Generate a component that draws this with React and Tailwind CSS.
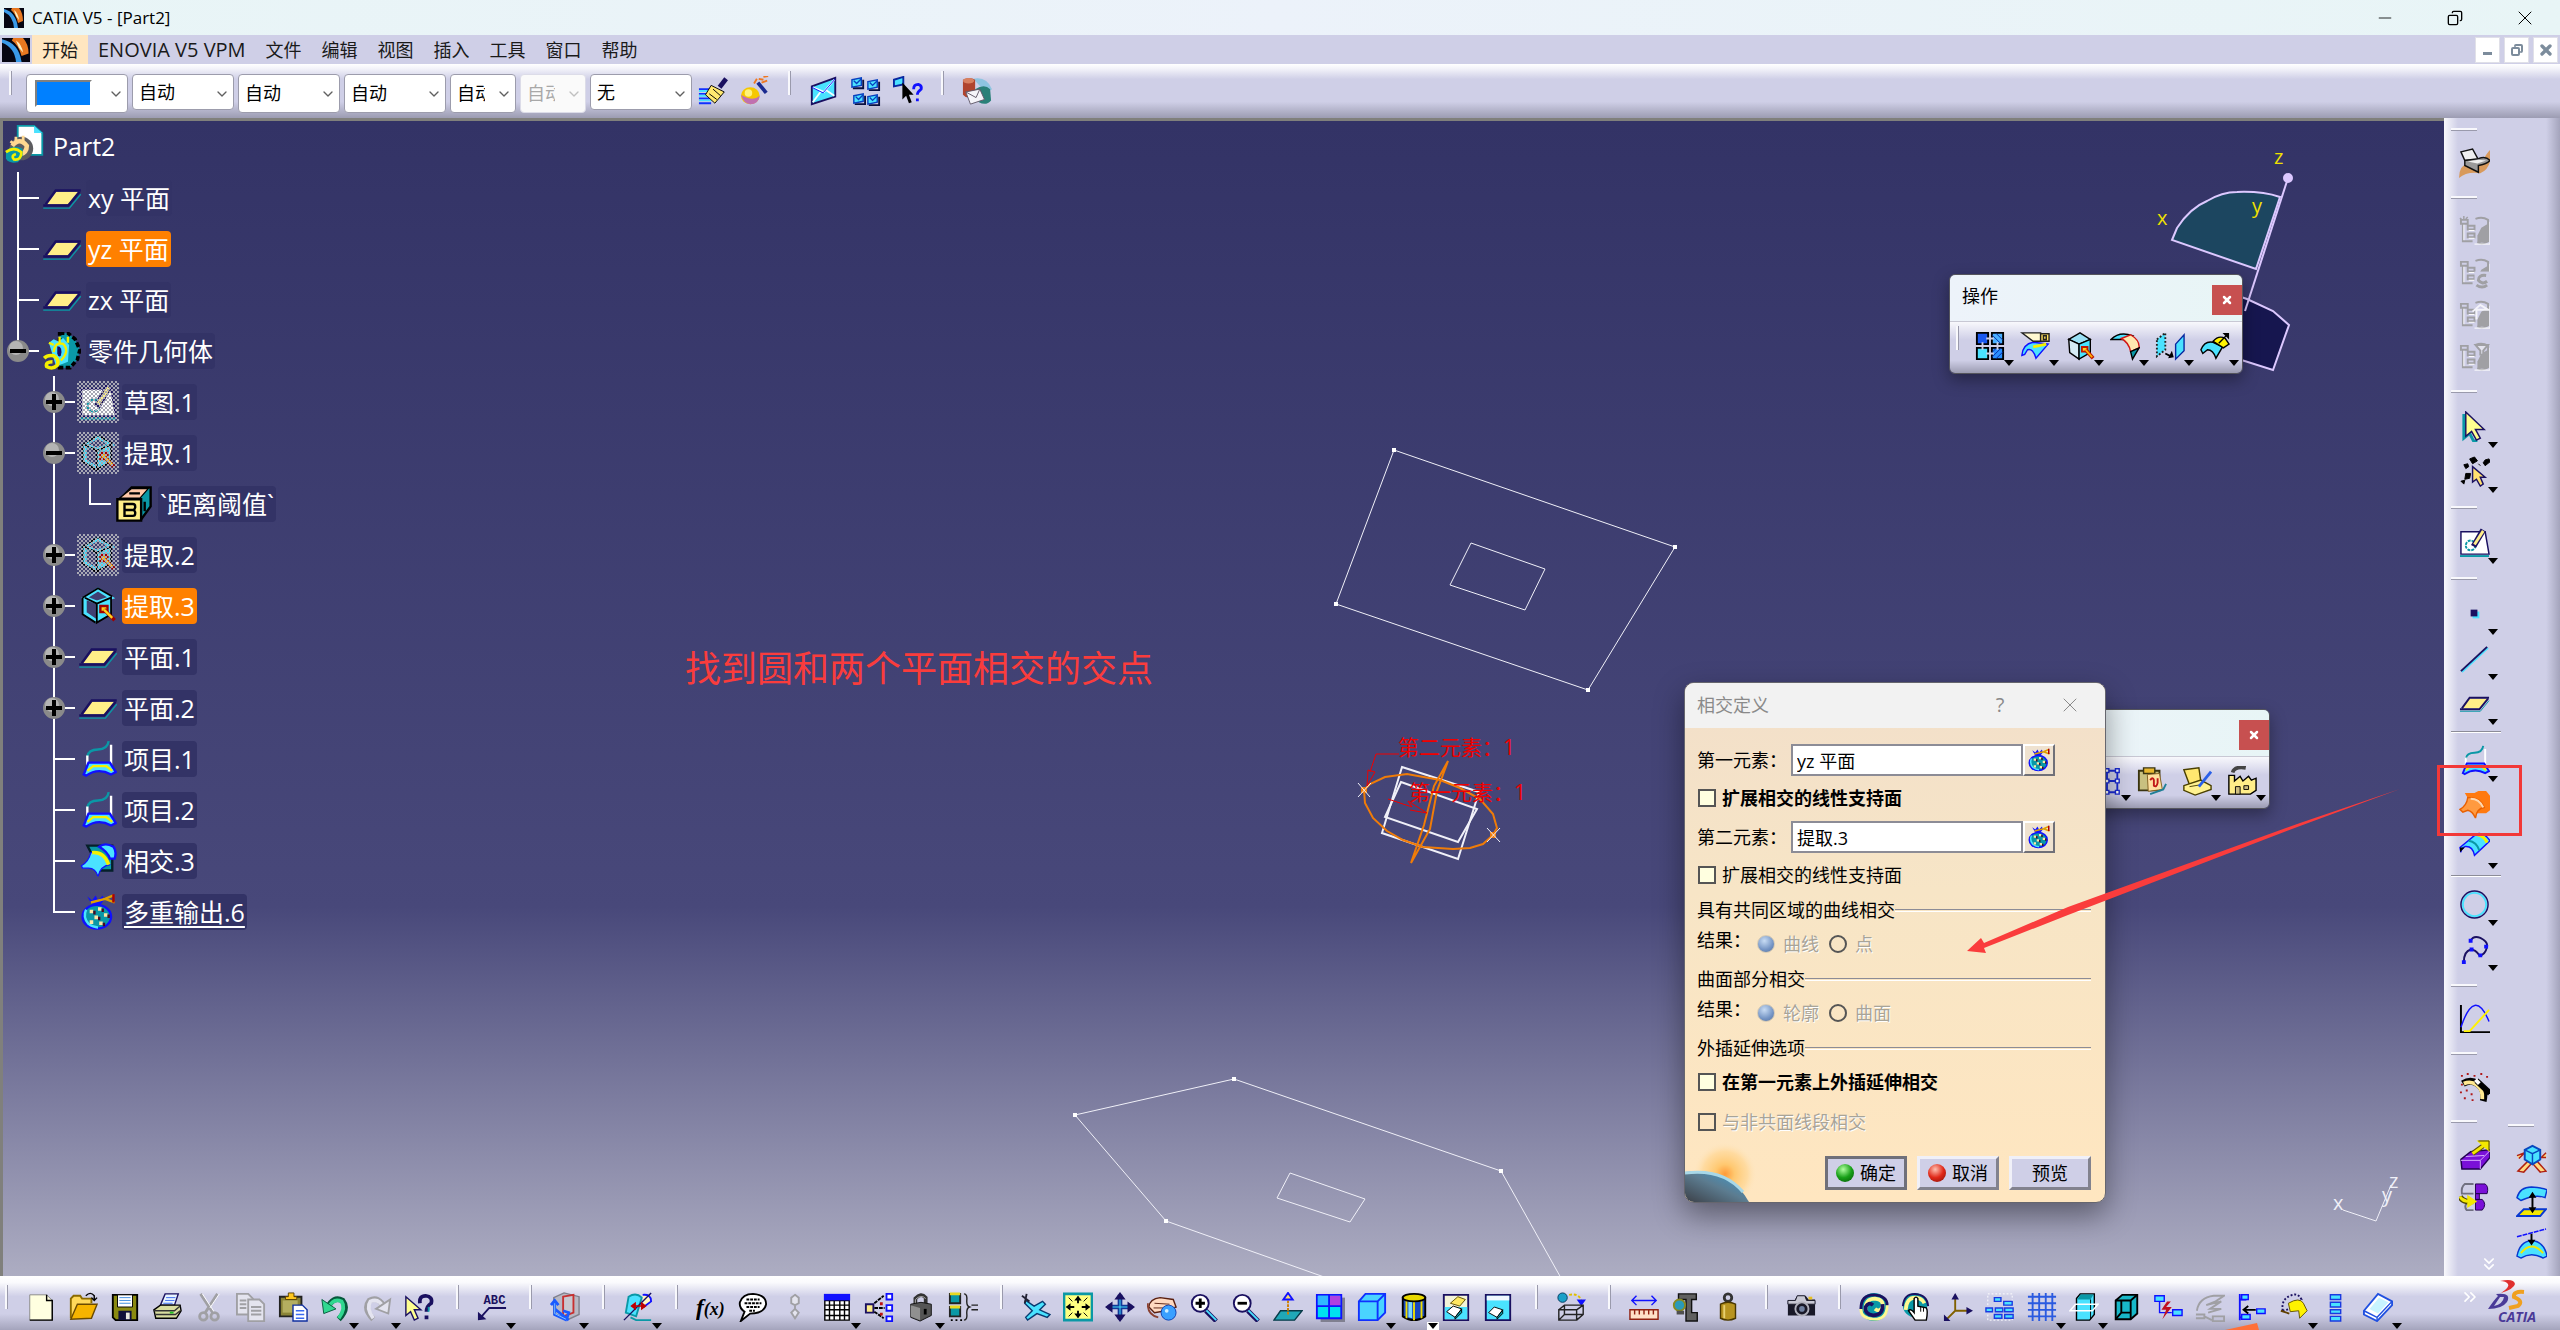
import React from 'react';
import { ChevronDown, ChevronsRight, ChevronsDown, Minus, Copy, X } from 'lucide-react';

const FONT = "font-['Open_Sans','Noto_Sans_CJK_SC',sans-serif]";

const NAVY = '#1a1060';
const CYAN = '#4ae2ff';
const TEAL = '#0a98a6';
const BLUE = '#1010ff';
const PALE = '#ffee88';
const GREY = '#a0a0a4';

const planeIcon = (
  <>
    <path d="M10 11 L30 11 L21 21 L3 21 Z" fill={PALE} />
    <path d="M3 21 L11 10 H31" fill="none" stroke={NAVY} strokeWidth="2" />
    <path d="M1 22 H21 L30 11" fill="none" stroke={NAVY} strokeWidth="2" />
    <path d="M1 24 H22 L31 13" fill="none" stroke={TEAL} strokeWidth="1" />
  </>
);

const cubeExtract = (
  <>
    <path d="M4 9 L16 2 L27 9 L15 14 Z" fill="#9ae0f4" stroke="#000" strokeWidth="1.5" />
    <path d="M4 9 L15 14 V30 L5 23 Z" fill="#d6ecf5" stroke="#000" strokeWidth="1.5" />
    <path d="M15 14 L27 9 V23 L15 30 Z" fill={CYAN} stroke="#000" strokeWidth="1.5" />
    <path d="M18 17 h6 v5 h-6 z" fill="#ffd21c" stroke="#c01800" strokeWidth="2" />
    <path d="M22 20 L30 29" stroke="#c01800" strokeWidth="4" />
    <path d="M22 20 L29 28" stroke="#ffb400" strokeWidth="2" />
  </>
);

// same cube seen through: only the right face is filled
const cubeExtractOpen = (
  <>
    <path d="M5 9 L16 2 L27 9 L15 13 Z M5 9 V22 L15 29" fill="none" stroke={CYAN} strokeWidth="3" />
    <path d="M3 9 L16 1 L28 8 M3 9 V23 L14 30 M5 9 L15 14" fill="none" stroke="#000" strokeWidth="1.5" />
    <path d="M15 14 L27 9 V23 L15 30 Z" fill={CYAN} stroke="#000" strokeWidth="1.5" />
    <path d="M18 16 h6 v5 h-6 z" fill="#ffd21c" stroke="#a00000" strokeWidth="2" />
    <path d="M21 19 L30 28" stroke="#a00000" strokeWidth="3" />
    <path d="M21 19 L28 26" stroke="#ffd21c" strokeWidth="2" />
  </>
);

const bagIcon = (
  <>
    <path d="M7 3 l4 3 l3 -4 l2 4 l4 -4 l1 4 l-3 4 h-7 z" fill={BLUE} />
    <path d="M10 8 L22 5 L29 2 M22 5 L30 8" stroke="#e0a000" strokeWidth="2" fill="none" />
    <path d="M29 1 V8" stroke="#b00000" strokeWidth="2" />
    <ellipse cx="15" cy="20" rx="12" ry="10" fill={TEAL} stroke={BLUE} strokeWidth="2" />
    <path d="M6 14 Q3 20 8 26 Q12 29 16 29" stroke={CYAN} strokeWidth="2" fill="none" />
    <path d="M9 14h3v3h-3z M16 12h3v3h-3z M21 17h3v3h-3z M13 19h3v3h-3z M9 23h3v3h-3z M17 24h3v3h-3z" fill="#ffe7a8" />
    <path d="M12 15h2v3h-2z M19 13h2v3h-2z M24 18h2v3h-2z M16 20h2v3h-2z M20 25h2v3h-2z" fill="#4a0a20" />
  </>
);

const itemIcon = (
  <>
    <path d="M7 14 Q8 8 16 8 Q24 8 25 1" fill="none" stroke={TEAL} strokeWidth="2" />
    <path d="M7 13 V26 M27 4 V22" stroke="#fff" strokeWidth="2" />
    <path d="M4 29 L8 19 H26 L31 27 L27 29 Q16 23 6 30 Z" fill={CYAN} stroke={BLUE} strokeWidth="2" />
    <path d="M7 26 L12 22 H23 L28 26" fill="none" stroke="#f4f000" strokeWidth="2" />
  </>
);

const intersectIcon = (
  <>
    <path d="M7 3 H28 V24 H18 Z" fill={TEAL} stroke="#06202a" strokeWidth="2" />
    <path d="M17 4 Q22 0 29 4 Q32 8 30 14 L26 14 Q24 8 17 4 Z" fill={CYAN} stroke={BLUE} strokeWidth="2" />
    <path d="M2 20 Q8 17 10 9 Q22 8 26 19 Q18 20 16 29 Q14 22 8 22 L3 22 Z" fill={CYAN} stroke={BLUE} strokeWidth="1" />
    <path d="M11 9 Q21 8 25 19" fill="none" stroke="#f4f000" strokeWidth="3" />
  </>
);

// greyed database buttons share the little tree on the left
const disabledTree = (
  <>
    <path d="M2 4 h7 v4 h-7 z M9 10 h7 v4 h-7 z M9 18 h7 v4 h-7 z M4 8 V26 H14" fill="none" stroke={GREY} strokeWidth="2" />
    <path d="M17 3 Q24 0 30 4 V26 Q24 30 19 27" fill="none" stroke={GREY} strokeWidth="2" />
    <path d="M23 12 L30 8 V27 H19 V20 Z" fill={GREY} />
    <path d="M32 6 V29 H16 M5 9 V25 M10 15 H16 M10 23 H16" stroke="#fff" strokeWidth="1" fill="none" />
  </>
);

const ICONS = {
  plane: planeIcon,
  extract: cubeExtract,
  extractOpen: cubeExtractOpen,
  bag: bagIcon,
  item: itemIcon,
  intersect: intersectIcon,
  body: (
    <>
      <path d="M14 1 h7 l6 5 l4 9 l-2 8 l-6 7 h-9 z" fill={TEAL} stroke="#000" strokeWidth="3" strokeDasharray="4 2" />
      <path d="M5 9 l4 -3 l4 2 l4 -3 l5 6 l-1 14 l-10 4 z" fill={CYAN} />
      <path d="M14 4 v5 M21 4 v5 M5 9 l4 2 M9 17 Q10 8 17 10 Q23 16 15 24" fill="none" stroke="#f4f000" strokeWidth="2" />
      <path d="M12 12 Q17 12 15 20 Q13 22 12 18 Z" fill={NAVY} />
      <path d="M1 22 Q4 19 9 20 Q14 23 12 28 Q8 32 3 29 Q2 25 8 25" fill="none" stroke="#f4f000" strokeWidth="3" />
    </>
  ),
  sketch: (
    <>
      <path d="M2 5 H27 L31 28 H2 Z" fill="#fff" stroke={NAVY} strokeWidth="1.5" />
      <circle cx="12" cy="19" r="5" fill="none" stroke={TEAL} strokeWidth="2" strokeDasharray="3 1" />
      <path d="M15 20 L25 3" stroke={NAVY} strokeWidth="6" />
      <path d="M16 18 L25 4" stroke={PALE} strokeWidth="3" />
      <path d="M1 30 H31" stroke={TEAL} strokeWidth="2" />
    </>
  ),
  param: (
    <>
      <path d="M4 12 L14 2 H30 V18 L22 29 Z" fill={TEAL} stroke="#000" strokeWidth="2" />
      <path d="M4 11 L14 3 H28 L21 11 Z" fill="#ffc8a8" stroke="#000" strokeWidth="1" />
      <path d="M12 7 h9 M25 14 v8" stroke="#000" strokeWidth="2" />
      <path d="M2 12 h20 v18 h-20 z" fill={PALE} stroke="#000" strokeWidth="2" />
      <path d="M8 16 h7 q2 0 2 2 v1 l-1 2 l1 2 v1 q0 2 -2 2 h-7 z M8 21 h8" fill="none" stroke="#000" strokeWidth="2" />
    </>
  ),
  brush: (
    <>
      <path d="M1 14 H14 M1 19 H16 M1 24 H18 M1 29 H14" stroke="#1030ff" strokeWidth="2" />
      <path d="M1 16 H14 M1 21 H14 M1 26 H14" stroke={CYAN} strokeWidth="2" />
      <path d="M14 10 L28 17 L18 29 L8 20 Z" fill="#ffe870" stroke="#000" strokeWidth="1" />
      <path d="M12 19 L20 25 M16 14 L24 21" stroke="#000" strokeWidth="1" />
      <path d="M23 12 L30 3" stroke={NAVY} strokeWidth="5" />
    </>
  ),
  magic: (
    <>
      <ellipse cx="11" cy="21" rx="10" ry="9" fill="#f5c800" />
      <path d="M1 20 Q4 30 11 30 Q20 30 21 21 Q14 28 1 20 Z" fill="#c070b0" />
      <ellipse cx="9" cy="18" rx="4" ry="4" fill="#fff27a" />
      <path d="M19 7 L28 18" stroke="#1a2a90" strokeWidth="4" />
      <path d="M15 8 l3 -5 M20 3 l5 1 M25 1 l5 -1 M23 7 l6 -2" stroke="#f07820" strokeWidth="2" />
    </>
  ),
  envelope: (
    <>
      <path d="M3 11 L28 2 V22 L3 30 Z" fill={CYAN} stroke={NAVY} strokeWidth="2" />
      <path d="M4 12 L16 17 L27 4 M4 28 L13 16 M27 21 L18 15" fill="none" stroke="#f4ffff" strokeWidth="2" />
      <path d="M28 3 L15 18 L3 12" fill="none" stroke={BLUE} strokeWidth="1" />
    </>
  ),
  envelopes: (
    <>
      {[[1, 2], [18, 4], [3, 19], [18, 20]].map(([x, y]) => (
        <g key={`${x}-${y}`}>
          <path d={`M${x + 1} ${y + 11} h11 v-9`} fill="none" stroke="#0a1040" strokeWidth="2" />
          <path d={`M${x} ${y + 2} L${x + 10} ${y} V${y + 8} L${x} ${y + 10} Z`} fill={CYAN} stroke="#0840c0" strokeWidth="1.5" />
          <path d={`M${x + 2} ${y + 3} l3 3 l5 -5`} fill="none" stroke="#0840c0" strokeWidth="1.5" />
        </g>
      ))}
    </>
  ),
  whatsThisMail: (
    <>
      <path d="M1 4 L11 1 V9 L1 11 Z" fill={CYAN} stroke="#0828a0" strokeWidth="2" />
      <path d="M10 7 V25 L14 21 L17 29 L20 28 L17 20 H22 Z" fill="#000" />
      <path d="M22 14 Q22 9 27 9 Q31 10 30 14 Q26 17 26 20 M26 24 V27" fill="none" stroke={BLUE} strokeWidth="3" />
    </>
  ),
  catalog: (
    <>
      <path d="M12 3 Q26 0 32 14 L26 18 Z" fill="#8ec4e0" />
      <path d="M1 4 Q8 1 14 4 V20 Q6 26 1 20 Z" fill="#b0442e" />
      <ellipse cx="7" cy="5" rx="6" ry="3" fill="#d88060" />
      <path d="M14 14 Q24 8 30 14 L31 26 Q26 32 18 28 Z" fill="#2a8078" />
      <path d="M4 17 L19 14 L24 25 L9 30 Z" fill="#f5f5fa" stroke="#605868" strokeWidth="1" />
      <path d="M4 17 L15 23 L19 14" fill="none" stroke="#605868" strokeWidth="1" />
    </>
  ),
  newFile: (
    <>
      <path d="M4 3 H22 L28 9 V30 H4 Z" fill="#ffffe0" stroke="#888" strokeWidth="1" />
      <path d="M22 3 V9 H28 V30 H4" fill="none" stroke="#000" strokeWidth="1.5" />
    </>
  ),
  open: (
    <>
      <path d="M3 28 V7 L6 4 H13 L15 7 H25 V12" fill="#ffd95a" stroke="#8a6a00" strokeWidth="2" />
      <path d="M3 29 L10 13 H31 L25 28 Z" fill="#f6b400" stroke="#6a4a00" strokeWidth="1.5" />
      <path d="M19 4 Q24 -1 28 4 V8 M25 6 L28 9 L31 6" fill="none" stroke="#000" strokeWidth="1.5" />
    </>
  ),
  save: (
    <>
      <path d="M3 3 H29 V30 H6 L3 27 Z" fill="#8a8a10" stroke="#000" strokeWidth="2" />
      <path d="M8 3 H24 V16 H8 Z" fill="#fff" stroke="#000" strokeWidth="1" />
      <path d="M10 6 H22 M10 9 H22 M10 12 H22" stroke="#3a8ae0" strokeWidth="1" />
      <path d="M9 20 H23 V30 H9 Z" fill="#10103a" />
      <path d="M17 22 h4 v7 h-4 z" fill="#e8e8e0" />
    </>
  ),
  print: (
    <>
      <path d="M9 14 L14 2 H28 L24 14 Z" fill="#e8f4ff" stroke={NAVY} strokeWidth="1.5" />
      <path d="M15 6 H25 M14 9 H24 M12 12 H22" stroke="#3a6af0" strokeWidth="1" />
      <path d="M2 19 L9 14 H30 L31 20 L26 28 H4 Z" fill="#d8dca0" stroke="#000" strokeWidth="1.5" />
      <path d="M2 20 H24 L30 15 M4 24 H25 L30 20" fill="none" stroke="#333" strokeWidth="1.5" />
      <path d="M19 21 h4 v2 h-4z" fill="#20c020" />
    </>
  ),
  cut: (
    <>
      <path d="M7 2 L20 22 M25 2 L12 22" stroke={GREY} strokeWidth="3" />
      <path d="M9 2 L22 22 M27 2 L17 17" stroke="#fff" strokeWidth="1" />
      <circle cx="10" cy="26" r="4" fill="none" stroke={GREY} strokeWidth="3" />
      <circle cx="22" cy="26" r="4" fill="none" stroke={GREY} strokeWidth="3" />
    </>
  ),
  copy: (
    <>
      <path d="M1 2 H13 L18 7 V24 H1 Z" fill="#e4e4ee" stroke={GREY} strokeWidth="2" />
      <path d="M13 8 H25 L30 13 V31 H13 Z" fill="#e4e4ee" stroke={GREY} strokeWidth="2" />
      <path d="M4 9 H11 M4 13 H11 M4 17 H11 M16 16 H27 M16 20 H27 M16 24 H27" stroke={GREY} strokeWidth="2" />
    </>
  ),
  paste: (
    <>
      <path d="M2 5 H25 V26 H2 Z" fill="#8a8438" stroke="#222" strokeWidth="2" />
      <path d="M5 9 H21 V22 H5 Z" fill="#b4ae60" />
      <path d="M8 8 V5 H11 V1 H17 V5 H20 V8 Z" fill="#ffc820" stroke="#5a4000" strokeWidth="1" />
      <path d="M16 14 H26 L31 19 V31 H16 Z" fill="#fff" stroke="#1030a0" strokeWidth="1.5" />
      <path d="M19 20 H28 M19 24 H28 M19 28 H28" stroke="#3a6af0" strokeWidth="1.5" />
    </>
  ),
  undo: (
    <>
      <path d="M8 17 Q14 4 24 9 Q31 18 20 29" fill="none" stroke="#065a3c" strokeWidth="6" />
      <path d="M9 17 Q14 6 23 10 Q28 17 20 28" fill="none" stroke="#30d890" strokeWidth="4" />
      <path d="M2 8 L4 23 L17 18 Z" fill="#30d890" stroke="#065a3c" strokeWidth="1" />
    </>
  ),
  redo: (
    <>
      <path d="M24 17 Q18 4 8 9 Q1 18 12 29" fill="none" stroke={GREY} strokeWidth="6" />
      <path d="M23 17 Q18 6 9 10 Q4 17 12 28" fill="none" stroke="#e4e4f0" strokeWidth="4" />
      <path d="M30 8 L28 23 L15 18 Z" fill="#e4e4f0" stroke={GREY} strokeWidth="2" />
    </>
  ),
  help: (
    <>
      <path d="M2 5 V25 L7 21 L11 30 L15 28 L11 19 H18 Z" fill="#ffff90" stroke={NAVY} strokeWidth="1.5" />
      <path d="M17 12 Q16 4 23 4 Q31 5 29 12 Q24 15 24 21 M24 25 V29" fill="none" stroke={NAVY} strokeWidth="4" />
      <path d="M26 16 Q27 18 26 21" stroke={TEAL} strokeWidth="2" fill="none" />
    </>
  ),
  annotation: (
    <>
      <text x="7" y="13" fontSize="13" fontFamily="Liberation Mono" fontWeight="bold" fill={NAVY}>ABC</text>
      <path d="M31 17 H13 L4 27" fill="none" stroke={NAVY} strokeWidth="2" />
      <path d="M1 21 L1 30 L10 29 Z" fill={NAVY} />
    </>
  ),
  boxAxes: (
    <>
      <path d="M4 6 L15 1 L31 5 V24 L20 29 L4 24 Z" fill="#b8b8c4" stroke="#80808c" strokeWidth="1.5" />
      <path d="M14 5 L25 3 V22 L14 26 Z" fill="#c8c8d0" stroke="#c83030" strokeWidth="2" />
      <path d="M5 10 V24 L18 30 M5 18 L20 30 M1 14 L5 9 L9 14 M14 20 L20 22 L18 28" fill="none" stroke="#1a5aff" strokeWidth="3" />
      <path d="M5 12 V23 L17 29" fill="none" stroke="#80c8ff" strokeWidth="1" />
    </>
  ),
  constraint: (
    <>
      <path d="M6 5 Q14 0 20 6 L14 26 L3 22 Z" fill={CYAN} stroke={TEAL} strokeWidth="2" />
      <path d="M21 3 Q30 2 30 10 L22 16" fill="#fff6c0" stroke={BLUE} strokeWidth="2" />
      <path d="M30 1 L1 30" stroke={NAVY} strokeWidth="1.5" />
      <path d="M9 15 H24 M9 15 l4 -3 v6 z M24 15 l-4 -3 v6 z" stroke="#c00000" fill="#c00000" strokeWidth="1.5" />
      <path d="M8 27 L14 30 H30" fill="none" stroke={TEAL} strokeWidth="2" />
    </>
  ),
  fx: (
    <text x="0" y="24" fontSize="25" fontFamily="Liberation Serif" fontStyle="italic" fontWeight="bold" fill="#000">
      f<tspan fontSize="19">(x)</tspan>
    </text>
  ),
  comment: (
    <>
      <path d="M16 2 Q30 3 30 13 Q28 23 13 23 L3 31 L7 21 Q1 17 2 11 Q5 2 16 2 Z" fill="#fff" stroke="#000" strokeWidth="2" />
      <path d="M9 8 H23 M7 12 H25 M9 16 H23 M12 20 H18" stroke="#000" strokeWidth="2" strokeDasharray="3 1" />
    </>
  ),
  chain: (
    <path d="M16 3 l4 3 v6 l-4 2 l-4 -2 v-6 z M16 18 l4 4 l-4 6 l-4 -6 z M16 14 V18" fill="#e4e4ee" stroke={GREY} strokeWidth="2" />
  ),
  table: (
    <>
      <path d="M3 3 H29 V30 H3 Z" fill="#fff" />
      <path d="M3 9 H29 V30 H3 Z M8 9 V30 M13 9 V30 M19 9 V30 M24 9 V30 M3 14 H29 M3 19 H29 M3 25 H29" fill="none" stroke="#000" strokeWidth="1.5" />
      <path d="M2 2 H30 V9 H2 Z" fill={BLUE} />
    </>
  ),
  relations: (
    <>
      <path d="M2 13 h8 v9 h-8 z" fill={PALE} stroke={NAVY} strokeWidth="2" />
      <path d="M24 2 h6 v6 h-6 z M24 14 h6 v6 h-6 z M24 26 h6 v5 h-6 z" fill="#fff" stroke={BLUE} strokeWidth="2" />
      <path d="M11 12 L21 4 M11 17 H22 M11 21 L21 28" stroke="#000" strokeWidth="2" strokeDasharray="4 1" />
      <path d="M17 11 h3 v3 h-3z M17 22 h3 v3 h-3z" fill="#c01010" />
    </>
  ),
  lock: (
    <>
      <path d="M10 14 V7 Q16 0 21 6 V14" fill="none" stroke="#333" strokeWidth="4" />
      <path d="M10 14 V8 Q16 2 21 7" fill="none" stroke="#b0b0b0" strokeWidth="1" />
      <path d="M5 13 L16 11 L27 13 V25 L15 31 L5 27 Z" fill="#555" stroke="#111" strokeWidth="1" />
      <path d="M5 14 L15 17 V30 L5 26 Z" fill="#909090" />
      <path d="M19 18 h3 v6 h-3 z" fill="#000" />
    </>
  ),
  equation: (
    <>
      <path d="M2 2 h11 v10 h-11 z M2 16 h11 v10 h-11 z" fill={TEAL} stroke="#222" strokeWidth="2" />
      <path d="M2 2 h11 M2 16 h11" stroke="#e8d820" strokeWidth="3" />
      <path d="M3 30 h2 M8 30 h2 M13 30 h2" stroke="#000" strokeWidth="2" />
      <path d="M17 2 Q21 2 20 10 Q20 15 23 16 Q20 17 20 22 Q21 30 17 30 M25 14 H32 M25 19 H32" fill="none" stroke="#222" strokeWidth="1.5" />
    </>
  ),
  fly: (
    <>
      <path d="M5 9 L14 15 L23 10 L26 13 L20 19 L31 24 L28 27 L17 23 L7 30 L5 27 L12 20 L4 12 Z" fill={CYAN} stroke="#0a3a70" strokeWidth="1.5" />
      <path d="M1 4 L9 10 M6 2 L4 12" stroke="#223" strokeWidth="2" />
    </>
  ),
  fit: (
    <>
      <path d="M1 2 H31 V30 H1 Z" fill="#ffff80" stroke={TEAL} strokeWidth="3" />
      <path d="M16 5 V12 M16 20 V27 M4 16 H12 M20 16 H28" stroke="#000" strokeWidth="2" />
      <path d="M12 9 L16 4 L20 9 Z M12 23 L16 28 L20 23 Z M8 12 L3 16 L8 20 Z M24 12 L29 16 L24 20 Z" fill="#000" />
      <path d="M6 6 l4 4 M26 6 l-4 4 M6 26 l4 -4 M26 26 l-4 -4" stroke="#000" strokeWidth="1" />
    </>
  ),
  pan: (
    <>
      <path d="M16 3 V29 M3 16 H29" stroke="#123a9a" strokeWidth="5" />
      <path d="M16 3 V29 M3 16 H29" stroke={CYAN} strokeWidth="1" />
      <path d="M10 8 L16 0 L22 8 Z M10 24 L16 32 L22 24 Z M8 10 L0 16 L8 22 Z M24 10 L32 16 L24 22 Z" fill={NAVY} />
    </>
  ),
  rotate: (
    <>
      <path d="M2 16 Q3 7 14 6 L28 8 L31 16 L20 20 L8 22 Z" fill="#ffd9c0" stroke="#5a2010" strokeWidth="1.5" />
      <path d="M8 12 L24 13 M7 17 L20 17" stroke="#5a2010" strokeWidth="1" />
      <path d="M1 12 Q0 24 12 27" fill="none" stroke="#8a4030" strokeWidth="2" />
      <circle cx="23" cy="22" r="8" fill="#3aa0ff" stroke="#1040b0" strokeWidth="1" />
      <circle cx="21" cy="20" r="2" fill="#cfeeff" />
    </>
  ),
  zoomIn: (
    <>
      <path d="M18 20 L29 31" stroke={NAVY} strokeWidth="5" />
      <path d="M18 19 L29 30" stroke={CYAN} strokeWidth="2" />
      <circle cx="12" cy="12" r="9" fill="#fff" stroke={NAVY} strokeWidth="2" />
      <path d="M12 7 V17 M7 12 H17" stroke="#000" strokeWidth="3" />
    </>
  ),
  zoomOut: (
    <>
      <path d="M18 20 L29 31" stroke={NAVY} strokeWidth="5" />
      <path d="M18 19 L29 30" stroke={CYAN} strokeWidth="2" />
      <circle cx="12" cy="12" r="9" fill="#fff" stroke={NAVY} strokeWidth="2" />
      <path d="M7 12 H17" stroke="#000" strokeWidth="3" />
    </>
  ),
  normalView: (
    <>
      <path d="M8 20 H31 L23 30 H1 Z" fill="#20a8b8" stroke="#083a48" strokeWidth="1.5" />
      <path d="M16 24 V6" stroke="#d08000" strokeWidth="2" strokeDasharray="3 1" />
      <path d="M11 8 L16 1 L21 8 Z" fill="#ffe070" stroke={BLUE} strokeWidth="2" />
    </>
  ),
  multiView: (
    <>
      <path d="M6 6 H32 V32 H6 Z" fill="#808090" />
      <path d="M2 3 H28 V28 H2 Z" fill="#00e0f0" stroke={BLUE} strokeWidth="2" />
      <path d="M16 4 H27 V15 H16 Z" fill="#b040e0" />
      <path d="M3 4 H14 V15 H3 Z" fill="#30b8ff" />
      <path d="M15 3 V28 M2 15 H28" stroke={BLUE} strokeWidth="2" />
    </>
  ),
  isoView: (
    <>
      <path d="M2 10 L9 2 H30 V22 L22 30 H2 Z" fill="#4ad4ff" stroke="#1030ff" strokeWidth="2" />
      <path d="M2 10 H22 L30 2 M22 10 V30" fill="none" stroke="#1030ff" strokeWidth="2" />
    </>
  ),
  shading: (
    <>
      <path d="M4 6 V26 Q16 34 28 26 V6 Z" fill="#1848c0" stroke="#000" strokeWidth="2" />
      <path d="M10 9 H14 V28 L10 27 Z" fill="#7ad8ff" />
      <path d="M8 9 V28 M24 9 V28 M16 9 V30" stroke="#f0e000" strokeWidth="2" />
      <ellipse cx="16" cy="6" rx="12" ry="4" fill="#e8d800" stroke="#000" strokeWidth="2" />
    </>
  ),
  hideShow: (
    <>
      <path d="M3 3 H29 V30 H3 Z" fill="#f4f4d8" stroke={NAVY} strokeWidth="2" />
      <path d="M4 16 H28 V29 H4 Z" fill={CYAN} />
      <path d="M10 12 L18 5 L26 8 L20 15 Z" fill="#ffe860" stroke="#605000" strokeWidth="1" />
      <path d="M6 21 L13 15 L22 18 L15 27 Z" fill="#fff" stroke="#000" strokeWidth="1" />
      <path d="M15 27 L22 18 V22 L15 29 Z" fill={TEAL} stroke="#000" strokeWidth="1" />
    </>
  ),
  swapSpace: (
    <>
      <path d="M3 3 H29 V30 H3 Z" fill={CYAN} stroke={NAVY} strokeWidth="2" />
      <path d="M4 4 H28 V9 H4 Z" fill="#f0f8ff" />
      <path d="M6 22 L12 16 L21 19 L15 27 Z" fill="#fff" stroke="#000" strokeWidth="1" />
      <path d="M15 27 L21 19 V23 L15 29 Z" fill={TEAL} stroke="#000" strokeWidth="1" />
    </>
  ),
  applyMaterial: (
    <>
      <circle cx="7" cy="6" r="5" fill="#1aa0c8" stroke="#063a60" strokeWidth="1" />
      <path d="M14 3 Q24 1 27 9" fill="none" stroke="#e0c000" strokeWidth="2" strokeDasharray="3 2" />
      <path d="M22 8 H32 L27 15 Z" fill={BLUE} />
      <path d="M3 19 H22 V30 H3 Z M3 19 L9 14 H29 V24 L22 30 M22 19 L29 14 M9 14 V24 H29 M3 30 L9 24" fill="none" stroke="#222" strokeWidth="1.5" />
    </>
  ),
  measure: (
    <>
      <path d="M3 9 H29 M8 4 L3 9 L8 14 M24 4 L29 9 L24 14" fill="none" stroke={BLUE} strokeWidth="1.5" />
      <path d="M1 19 H31 V29 H1 Z" fill="#ffe0c8" stroke="#902010" strokeWidth="1.5" />
      <path d="M6 19 V24 M11 19 V24 M16 19 V24 M21 19 V24 M26 19 V24" stroke="#902010" strokeWidth="1.5" />
    </>
  ),
  caliper: (
    <>
      <path d="M8 2 H27 V8 H22 V22 H28 V31 H16 V8 H8 Z" fill="#606060" stroke="#111" strokeWidth="1.5" />
      <circle cx="9" cy="14" r="6" fill="#2a9ab8" stroke="#8a8a20" strokeWidth="2" />
      <path d="M6 20 h8 v4 h-8 z" fill="#505050" />
    </>
  ),
  inertia: (
    <>
      <circle cx="16" cy="6" r="4" fill="none" stroke="#333" strokeWidth="3" />
      <path d="M8 13 Q16 9 24 13 V28 Q16 32 8 28 Z" fill="#b89420" stroke="#4a3800" strokeWidth="1.5" />
      <path d="M12 14 V28" stroke="#e8d070" strokeWidth="2" />
    </>
  ),
  camera: (
    <>
      <path d="M2 9 H9 L12 4 H21 L24 8 H31 V25 H2 Z" fill="#181828" />
      <path d="M2 9 H10 L12 4 H20 L22 9 H31 V13 H2 Z" fill="#c8c8d4" stroke="#181828" strokeWidth="1" />
      <circle cx="17" cy="18" r="7" fill="#181828" stroke="#b0b0bc" strokeWidth="2" />
      <circle cx="17" cy="18" r="3" fill="#7080a0" />
      <path d="M24 5 h4 v3 h-4z" fill="#e8c020" />
    </>
  ),
  swirl: (
    <>
      <ellipse cx="16" cy="16" rx="15" ry="15" fill={TEAL} />
      <path d="M2 18 Q2 3 16 3 Q30 4 30 14" fill="none" stroke={NAVY} strokeWidth="3" />
      <path d="M30 14 Q30 29 16 29 Q2 28 2 18" fill="none" stroke="#fff890" strokeWidth="3" />
      <path d="M7 20 Q6 7 17 7 Q27 8 25 16 Q22 22 17 18" fill="none" stroke="#fff890" strokeWidth="4" />
      <path d="M25 13 Q26 25 15 25 Q6 24 7 16 Q10 10 15 14" fill="none" stroke={NAVY} strokeWidth="4" />
    </>
  ),
  swirlHand: (
    <>
      <circle cx="15" cy="14" r="13" fill={TEAL} />
      <path d="M2 15 Q3 2 15 2 Q28 3 29 15" fill="none" stroke={NAVY} strokeWidth="2" />
      <path d="M5 19 Q6 6 15 6 Q22 6 25 12" fill="none" stroke="#fff890" strokeWidth="4" />
      <path d="M14 22 V7 Q16 4 18 7 V15 L27 17 Q29 20 27 30 H15 L8 20 Q10 17 14 22 Z" fill="#fff" stroke="#000" strokeWidth="1.5" />
      <path d="M21 16 v5 M24 17 v4" stroke="#000" strokeWidth="1" />
    </>
  ),
  axis: (
    <>
      <path d="M13 3 V20 H29 M13 20 L3 30" fill="none" stroke="#806000" strokeWidth="2" />
      <path d="M9 8 L13 1 L17 8 Z M25 16 L32 20 L25 24 Z M1 24 L1 31 L8 31 Z" fill={NAVY} />
    </>
  ),
  treeSelect: (
    <>
      <path d="M3 2 H29 V30 H3 Z" fill="none" stroke="#fff" strokeWidth="1" strokeDasharray="2 2" />
      <path d="M10 6 h7 v4 h-7 z M20 10 h9 v4 h-9 z M1 17 h7 v4 h-7z M11 17 h8 v4 h-8z M21 17 h9 v4 h-9z M10 24 h8 v4 h-8z M21 24 h9 v4 h-9z" fill={CYAN} stroke="#1a3ae0" strokeWidth="1.5" />
    </>
  ),
  grid: (
    <path d="M6 1 V31 M13 1 V31 M20 1 V31 M27 1 V31 M1 5 H31 M1 12 H31 M1 19 H31 M1 26 H31" stroke="#2a5ae0" strokeWidth="2" />
  ),
  clipBox: (
    <>
      <path d="M8 7 L12 2 H27 V24 L22 30 H8 Z" fill={CYAN} stroke="#000" strokeWidth="1.5" />
      <path d="M12 3 H26 L23 8 H9 Z" fill={TEAL} />
      <path d="M23 8 V29" stroke="#000" strokeWidth="1" />
      <path d="M1 20 L7 13 H31 L25 20 Z" fill="none" stroke="#fff" strokeWidth="1.5" />
    </>
  ),
  glassBox: (
    <>
      <path d="M5 9 L12 3 H28 V23 L21 29 H5 Z" fill="#18b8c8" stroke="#000" strokeWidth="2" />
      <path d="M5 9 H21 L28 3 M21 9 V29 M11 9 V22 H21 M11 22 L5 29" fill="none" stroke="#000" strokeWidth="2" />
    </>
  ),
  bolt: (
    <>
      <path d="M2 4 h10 v6 h-10 z M21 19 h10 v6 h-10 z" fill={CYAN} stroke={BLUE} strokeWidth="1.5" />
      <path d="M7 10 V22 H20" fill="none" stroke={BLUE} strokeWidth="1.5" />
      <path d="M15 10 L9 19 H14 L10 29 L20 16 H14 L19 10 Z" fill="#c01020" />
    </>
  ),
  handDisabled: (
    <path d="M2 20 Q4 6 20 4 L31 4 L22 10 L12 14 L28 10 L16 18 L28 18 L14 22 M1 24 h9 v4 h-9 M19 26 h12 v5 h-12 z M10 26 L18 30" fill="none" stroke={GREY} strokeWidth="2" />
  ),
  treeInsert: (
    <>
      <path d="M3 2 V30 M3 8 H10 M3 27 H10" stroke={BLUE} strokeWidth="2" />
      <path d="M5 3 h7 v5 h-7z M5 24 h9 v5 h-9z M21 18 h9 v5 h-9z" fill={CYAN} stroke={BLUE} strokeWidth="1.5" />
      <path d="M8 19 H20 M12 15 L7 19 L12 23" fill="none" stroke="#000" strokeWidth="2" />
    </>
  ),
  patch: (
    <>
      <path d="M4 20 Q2 8 12 4 Q20 0 24 8 L12 18 Z" fill="none" stroke={NAVY} strokeWidth="2" strokeDasharray="2 2" />
      <path d="M10 12 Q22 5 26 12 L30 20 L22 28 L21 20 L12 21 Z" fill="#fff200" stroke="#605000" strokeWidth="1" />
      <path d="M2 20 L11 23" stroke="#604000" strokeWidth="2" />
    </>
  ),
  stack: (
    <path d="M10 3 h11 v5 h-11z M10 11 h11 v5 h-11z M10 19 h11 v4 h-11z M10 26 h11 v5 h-11z" fill={CYAN} stroke="#1a3ae0" strokeWidth="1.5" />
  ),
  eraser: (
    <>
      <path d="M1 20 L16 2 L31 10 V14 L15 31 L1 24 Z" fill="#fff" stroke="#2050e0" strokeWidth="2" />
      <path d="M1 20 L15 27 L31 10 M15 27 V30" fill="none" stroke="#2050e0" strokeWidth="1.5" />
      <path d="M7 18 L17 6 L27 11 L16 23 Z" fill="#c8f4ff" />
    </>
  ),
  workbench: (
    <>
      <path d="M0 31 Q0 18 8 17 L24 14 Q28 6 32 2 Q35 20 22 26 Q8 24 0 31 Z" fill="#d89a5c" />
      <path d="M2 4 L14 1 L20 12 L6 13 Z" fill="#f0f0f0" stroke="#111" strokeWidth="1.5" />
      <path d="M6 13 L20 11 Q28 8 32 13 Q28 17 20 18 V25 L6 18 Z" fill="#9a9a9a" stroke="#111" strokeWidth="1.5" />
      <path d="M9 14 L20 12 L28 13 L19 16 Z" fill="#f0f0f0" />
    </>
  ),
  db1: (
    <>
      {disabledTree}
      <path d="M5 0 v3 M1 2 l2 2 M9 1 l-2 2" stroke={GREY} strokeWidth="1.5" />
    </>
  ),
  db2: (
    <>
      {disabledTree}
      <path d="M16 14 H32 V31 H16 Z" fill="#cfcfe7" />
      <path d="M28 18 Q20 17 20 23 Q24 28 29 24 M18 28 Q24 32 29 28" fill="none" stroke={GREY} strokeWidth="3" />
    </>
  ),
  db3: (
    <>
      {disabledTree}
      <path d="M14 12 L22 5 L30 10 H18 V20" fill="none" stroke="#f4f4fa" strokeWidth="2" />
    </>
  ),
  db4: (
    <>
      {disabledTree}
      <path d="M17 3 H30 L25 9 V13 H22 V9 Z" fill="#e4e4ee" stroke={GREY} strokeWidth="2" />
    </>
  ),
  arrow: (
    <>
      <path d="M5 3 V28 L11 23 L15 31 H19" fill="none" stroke={TEAL} strokeWidth="3" />
      <path d="M7 1 V26 L13 21 L18 30 L22 28 L17 19 H26 Z" fill="#ffff90" stroke={NAVY} strokeWidth="1.5" />
    </>
  ),
  multiSelect: (
    <>
      <path d="M11 3 l5 -2 l3 4 l-5 3 z M27 4 l4 -1 l1 3 l-5 4 l-2 -3 z M5 9 l4 -1 l1 3 l-3 2 z M7 18 l5 0 l-1 5 l-5 1 z M2 26 l4 -1 l-1 4 z M20 8 l2 2" fill="#000" stroke="#000" strokeWidth="1" />
      <path d="M14 11 V27 L18 24 L22 31 L25 29 L22 22 H27 Z" fill="#ffe070" stroke={NAVY} strokeWidth="1.5" />
    </>
  ),
  point: (
    <>
      <path d="M14 14 h7 v7 h-7 z" fill={CYAN} />
      <path d="M12 12 h7 v7 h-7 z" fill={NAVY} />
    </>
  ),
  line: (
    <>
      <path d="M3 30 L30 5" stroke={CYAN} strokeWidth="2" />
      <path d="M2 29 L29 4" stroke={NAVY} strokeWidth="2" />
    </>
  ),
  intersectActive: (
    <>
      <path d="M6 4 H16 L20 2 H28 L32 7 V22 L28 25 H18 Z" fill="#ff7a10" />
      <path d="M1 21 Q8 17 9 9 Q22 8 26 19 Q18 20 17 30 Q14 23 9 22 L4 24 Z" fill="#ff9a40" stroke="#e86000" strokeWidth="1.5" />
      <path d="M12 10 Q21 10 25 19" fill="none" stroke="#ffd8b0" strokeWidth="2" />
    </>
  ),
  offset: (
    <>
      <path d="M1 16 L18 2 Q26 0 32 9 L16 24 Q14 14 6 15 Q2 17 2 21 Z" fill={CYAN} stroke={BLUE} strokeWidth="1.5" />
      <path d="M19 3 Q26 4 29 11" fill="none" stroke="#f4f000" strokeWidth="3" />
      <path d="M10 9 Q18 10 21 19" fill="none" stroke={TEAL} strokeWidth="2" />
      <path d="M1 16 V21 L6 16 Z" fill="#000" />
    </>
  ),
  circle: (
    <>
      <circle cx="16" cy="16" r="12" fill="none" stroke={CYAN} strokeWidth="2" />
      <circle cx="16" cy="16" r="14" fill="none" stroke={NAVY} strokeWidth="1.5" />
    </>
  ),
  spline: (
    <>
      <path d="M12 7 Q15 1 22 4 Q30 8 29 13 Q27 22 21 22 Q17 16 12 16 Q5 18 5 29" fill="none" stroke={NAVY} strokeWidth="2" />
      <path d="M10 5h4v4h-4z M26 11h4v4h-4z M20 20h4v4h-4z M11 14h4v4h-4z M3 27h4v4h-4z" fill={BLUE} />
    </>
  ),
  law: (
    <>
      <path d="M2 1 V29 H32" fill="none" stroke="#000" strokeWidth="2" />
      <path d="M2 24 Q16 -18 31 18" fill="none" stroke={BLUE} strokeWidth="1.5" />
      <path d="M5 28 H11 L31 6" fill="none" stroke="#fff200" strokeWidth="2" />
    </>
  ),
  scan: (
    <>
      <path d="M2 3h2v2h-2z M8 1h2v2h-2z M15 3h2v2h-2z M22 1h2v2h-2z M28 4h2v2h-2z M2 12h2v2h-2z M1 20h2v2h-2z M7 18h2v2h-2z M12 22h2v2h-2z M5 26h2v2h-2z M13 28h2v2h-2z" fill="#b01818" />
      <path d="M4 12 Q12 7 19 12 Q28 18 25 30" fill="none" stroke="#000" strokeWidth="7" />
      <path d="M5 12 Q12 9 18 13 Q25 18 24 28" fill="none" stroke="#ffe890" strokeWidth="4" />
      <path d="M18 9 L32 22" stroke="#000" strokeWidth="6" />
      <path d="M17 8 L21 12" stroke="#fff" strokeWidth="4" />
    </>
  ),
  extrude: (
    <>
      <path d="M2 20 L12 12 L32 10 V18 L22 30 H3 Z" fill="#7a10d8" stroke="#220050" strokeWidth="1.5" />
      <path d="M2 21 L22 21 L32 11 M22 21 V30 M7 17 L26 16" fill="none" stroke="#d8b0ff" strokeWidth="1" />
      <path d="M14 14 L25 6" stroke="#605000" strokeWidth="5" />
      <path d="M14 14 L25 6 M22 2 H30 V9 Z" stroke="#f4e800" fill="#f4e800" strokeWidth="3" />
      <path d="M20 1 H31 V11" fill="none" stroke="#403800" strokeWidth="1" />
    </>
  ),
  revolve: (
    <>
      <path d="M17 2 H27 Q31 5 29 12 H17 Z M17 18 H24 Q29 23 24 29 H17 Z M17 12 h4 v6 h-4z" fill="#7a10d8" stroke="#220050" strokeWidth="1" />
      <path d="M15 2 H6 Q2 5 3 12 H15 M15 22 H8 Q5 25 8 29 H15" fill="none" stroke="#707080" strokeWidth="2" />
      <path d="M1 15 Q4 21 12 20" fill="none" stroke="#504800" strokeWidth="6" />
      <path d="M1 15 Q4 21 12 20 M10 16 L16 20 L10 24 Z" fill="#f4e800" stroke="#f4e800" strokeWidth="3" />
    </>
  ),
  explode: (
    <>
      <path d="M1 12 L9 9 L3 15 M31 9 L26 14 L31 14 M2 28 L12 18 L16 20 L8 29 Z M31 28 L22 18 L17 20 L25 29 Z" fill="#ffd880" stroke="#b02010" strokeWidth="1.5" />
      <path d="M9 6 L17 2 L25 6 V16 L17 21 L9 16 Z" fill={CYAN} stroke="#0848c0" strokeWidth="2" />
      <path d="M9 6 L17 10 L25 6 M17 10 V21" fill="none" stroke="#0848c0" strokeWidth="1.5" />
    </>
  ),
  surfDistance: (
    <>
      <path d="M1 12 Q4 1 16 1 Q28 2 32 4 L30 12 Q20 8 5 15 Z" fill={CYAN} stroke="#0838d0" strokeWidth="1.5" />
      <path d="M8 24 H31 L25 31 H1 Z" fill="#f4e800" stroke="#0838d0" strokeWidth="2" />
      <path d="M17 9 V26" stroke="#000" strokeWidth="2" />
      <path d="M13 12 L17 6 L21 12 Z M13 22 L17 28 L21 22 Z" fill="#000" />
    </>
  ),
  surfProject: (
    <>
      <path d="M1 9 L31 1" stroke={BLUE} strokeWidth="1.5" strokeDasharray="5 1" />
      <path d="M1 29 Q4 14 16 13 Q29 14 32 29 L28 31 Q16 24 5 31 Z" fill={CYAN} stroke="#0838d0" strokeWidth="1.5" />
      <path d="M5 26 Q16 12 28 26" fill="none" stroke="#f4e800" strokeWidth="2" />
      <path d="M16 6 V14" stroke="#000" strokeWidth="2" />
      <path d="M12 12 L16 18 L20 12 Z" fill="#000" />
    </>
  ),
  join: (
    <>
      <path d="M2 2 h12 v12 h-12 z" fill="#1a58f0" stroke="#000" strokeWidth="2" />
      <path d="M18 2 h12 v12 h-12 z" fill="#4ab0ff" stroke="#000" strokeWidth="2" />
      <path d="M2 18 h12 v12 h-12 z" fill={CYAN} stroke="#000" strokeWidth="2" />
      <path d="M18 18 h12 v12 h-12 z" fill="#2a90ff" stroke="#000" strokeWidth="2" />
      <path d="M18 4 L28 14 M22 2 L30 10 M18 28 L28 18 M22 30 L30 22 M18 23 L23 18" stroke="#0828a0" strokeWidth="1" />
      <path d="M12 8 h8 M12 24 h8 M8 12 v8 M24 12 v8" stroke="#cfcfe7" strokeWidth="2" />
    </>
  ),
  split: (
    <>
      <path d="M2 26 Q3 14 14 12 L30 14 L17 29 Q14 18 8 20 L5 25 Z" fill={CYAN} stroke={BLUE} strokeWidth="1.5" />
      <path d="M14 17 L28 14" stroke="#f4f000" strokeWidth="3" />
      <path d="M2 2 H22 V11 H14 Z" fill="#fff8d0" stroke="#222" strokeWidth="1.5" />
      <path d="M22 3 h9 v8 h-9 z M25 5 h3 v4 h-3z" fill="#ffe060" stroke="#222" strokeWidth="1.5" />
    </>
  ),
  sweep: (
    <>
      <path d="M1 9 Q10 0 24 5 L14 9 Z" fill={CYAN} stroke="#000" strokeWidth="1.5" />
      <path d="M12 8 L22 4 Q32 10 31 18 L22 22 Q20 12 12 8 Z" fill="#ffe8b0" stroke="#d01818" strokeWidth="1.5" />
      <path d="M22 22 L31 18 L24 30 Z" fill={TEAL} stroke="#000" strokeWidth="1.5" />
    </>
  ),
  translate: (
    <>
      <path d="M2 9 L11 2 V20 L2 27 Z" fill={CYAN} stroke="#222" strokeWidth="2" strokeDasharray="2 2" />
      <path d="M22 14 L31 4 V21 L22 30 Z" fill={CYAN} stroke="#0828a0" strokeWidth="1.5" />
      <path d="M11 24 L17 27" stroke="#000" strokeWidth="2" />
      <path d="M14 29 L20 28 L18 21 Z" fill="#000" />
    </>
  ),
  extrapolate: (
    <>
      <path d="M1 20 Q5 10 14 12 L24 17 L17 29 Q14 20 8 20 L3 24 Z" fill={CYAN} stroke="#000" strokeWidth="1.5" />
      <path d="M14 11 Q20 4 27 8 L31 14 L25 18 Z" fill="#fff200" stroke="#000" strokeWidth="1.5" />
      <path d="M20 13 L29 4" stroke="#000" strokeWidth="1.5" />
      <path d="M24 2 H31 V9 Z" fill="#000" />
    </>
  ),
  nodeGrid: (
    <>
      <path d="M5 5 V28 M16 5 V28 M27 5 V28 M5 5 H27 M5 16 H27 M5 28 H27" stroke="#1a2ad0" strokeWidth="2" />
      <path d="M3 3h4v4h-4z M14 3h4v4h-4z M25 3h4v4h-4z M3 14h4v4h-4z M14 14h4v4h-4z M25 14h4v4h-4z M3 26h4v4h-4z M14 26h4v4h-4z M25 26h4v4h-4z" fill="#fff" stroke="#1a2ad0" strokeWidth="1.5" />
    </>
  ),
  clipboard: (
    <>
      <path d="M2 5 H24 V26 H2 Z" fill="#c8c080" stroke="#3a3410" strokeWidth="2" />
      <path d="M7 2 H19 V8 H7 Z" fill="#e8b830" stroke="#3a3410" strokeWidth="1.5" />
      <path d="M11 9 L24 8 L27 25 L12 27 Z" fill="#ffe0a0" stroke="#806020" strokeWidth="1" />
      <path d="M14 15 q3 -4 4 0 l0 6 q3 2 4 -3 v-5" fill="none" stroke="#c01818" strokeWidth="2" />
      <path d="M14 30 L28 25 L31 19" fill="none" stroke="#208098" strokeWidth="2" />
    </>
  ),
  catalogBook: (
    <>
      <path d="M2 4 L18 2 L20 16 L8 20 Z" fill="#ffe870" stroke="#4a4000" strokeWidth="1.5" />
      <path d="M2 21 L20 15 L31 21 V25 L14 31 L2 26 Z" fill="#fff290" stroke="#4a4000" strokeWidth="1.5" />
      <path d="M8 22 L20 20" stroke="#4a4000" strokeWidth="1" />
      <path d="M18 22 L31 6" stroke="#2a60e8" strokeWidth="3" />
    </>
  ),
  factory: (
    <>
      <path d="M6 7 Q8 0 20 2" fill="none" stroke="#444" strokeWidth="4" />
      <path d="M2 30 V10 H8 V16 L14 11 L17 16 L23 11 L26 15 L31 13 V26 L25 30 Z" fill="#ffee88" stroke="#000" strokeWidth="1.5" />
      <path d="M9 22 h5 v8 h-5 z M18 21 h5 v4 h-5z" fill="#cfc080" stroke="#000" strokeWidth="1" />
    </>
  ),
};

const Glyph = ({ name, className = 'size-8' }) => (
  <svg viewBox="0 0 32 32" className={`${className} shrink-0`} aria-hidden="true">
    {ICONS[name]}
  </svg>
);

const AppLogo = ({ className }) => (
  <svg viewBox="0 0 20 20" preserveAspectRatio="none" className={className} aria-hidden="true">
    <rect width="20" height="20" fill="#060612" />
    <path d="M8 0 H15 Q19 5 19 13 L14 15 Q12 6 7 2 Z" fill="#e87820" />
    <path d="M10 2 Q14 5 15 12 L12 8 Z" fill="#fff0c0" />
    <path d="M0 1 Q12 4 14 20 H10 Q9 8 0 4 Z" fill="#3a9ae8" />
  </svg>
);

const Tool = ({ name, menu = false, highlight = false }) => (
  <button type="button" aria-label={name} className="relative flex h-full w-[42px] shrink-0 items-center justify-center">
    <Glyph name={name} className="size-[30px]" />
    {menu && (
      <span className={`absolute bottom-0 right-[-4px] flex h-2 w-3 items-center justify-center ${highlight ? 'bg-white' : ''}`}>
        <svg viewBox="0 0 12 8" className="h-2 w-3">
          <path d="M1 1 H11 L6 7 Z" fill="#000" />
        </svg>
      </span>
    )}
  </button>
);

const VGrip = ({ className = '' }) => (
  <span className={`w-[3px] shrink-0 border-r border-[#9a9aac] bg-[#f8f8fc] ${className}`} />
);

const HGrip = () => (
  <div className="flex h-[26px] items-center">
    <span className="h-[3px] w-[26px] border-b border-[#9a9aac] bg-[#f8f8fc]" />
  </div>
);

const combos = [
  { id: 'color', value: '', box: 'w-[102px] h-[39px]', swatch: true },
  { id: 'thickness', value: '自动', box: 'w-[102px] h-[36px]' },
  { id: 'linetype', value: '自动', box: 'w-[102px] h-[39px]' },
  { id: 'symbol', value: '自动', box: 'w-[102px] h-[39px]' },
  { id: 'transparency', value: '自动', box: 'w-[66px] h-[39px]' },
  { id: 'rendering', value: '自动', box: 'w-[66px] h-[39px]', disabled: true },
  { id: 'layer', value: '无', box: 'w-[102px] h-[36px]' },
];

const Combo = ({ id, value, box, swatch, disabled }) => (
  <div className={`relative ${box}`}>
    <select
      aria-label={id}
      disabled={disabled}
      className={`size-full appearance-none overflow-hidden rounded-sm border pl-1.5 pr-[30px] text-lg leading-6 ${
        disabled ? 'border-[#dcdce8] bg-[#fafafa] text-[#a8a8a8]' : 'border-[#9c9cac] bg-white text-black'
      }`}
    >
      <option>{value}</option>
    </select>
    {swatch && (
      <span className="pointer-events-none absolute left-[9px] top-[6px] h-[27px] w-[57px] border-2 border-b-white border-l-[#808080] border-r-white border-t-[#808080] bg-[#0080ff]" />
    )}
    <ChevronDown
      strokeWidth={2}
      className={`pointer-events-none absolute right-1 top-3 size-4 ${disabled ? 'text-[#c0c0c0]' : 'text-[#606060]'}`}
    />
  </div>
);

const menus = ['开始', 'ENOVIA V5 VPM', '文件', '编辑', '视图', '插入', '工具', '窗口', '帮助'];

const TitleBar = () => (
  <header className="flex h-[35px] shrink-0 items-center bg-gradient-to-r from-[#e8f5f6] via-[#ecf2fa] to-[#e8f5f6] pl-1">
    <AppLogo className="size-5" />
    <h1 className="ml-2 flex-1 text-[17px] leading-6 text-black">CATIA V5 - [Part2]</h1>
    <button type="button" aria-label="minimize" className="flex w-[70px] justify-center"><Minus strokeWidth={1} className="size-5" /></button>
    <button type="button" aria-label="restore" className="flex w-[70px] justify-center"><Copy strokeWidth={2} className="size-4 -scale-x-100" /></button>
    <button type="button" aria-label="close" className="flex w-[70px] justify-center"><X strokeWidth={1} className="size-6" /></button>
  </header>
);

const MenuBar = () => (
  <nav className="flex h-[29px] shrink-0 items-center bg-[#cfcfe7] pl-0.5">
    <AppLogo className="h-6 w-7" />
    <ul className="ml-0.5 flex h-full flex-1 text-lg leading-7 text-[#1a1a1a]">
      {menus.map((label, i) => (
        <li key={label} className={i === 0 ? 'bg-[#ffe6c0]' : ''}>
          <button type="button" className={`h-full whitespace-nowrap px-[10px] leading-7 ${i === 1 ? 'text-xl leading-7' : ''}`}>{label}</button>
        </li>
      ))}
    </ul>
    <div className="flex gap-1 pr-0.5">
      <button type="button" aria-label="minimize document" className="flex h-[26px] w-[25px] items-center justify-center border border-[#e0e0e8] bg-white text-[#7c8c9c]">
        <span className="mt-2 h-[3px] w-[9px] bg-[#7c8c9c]" />
      </button>
      <button type="button" aria-label="restore document" className="flex h-[26px] w-[25px] items-center justify-center border border-[#e0e0e8] bg-white text-[#7c8c9c]">
        <Copy strokeWidth={4} className="size-3 -scale-x-100" />
      </button>
      <button type="button" aria-label="close document" className="flex h-[26px] w-[25px] items-center justify-center border border-[#e0e0e8] bg-white text-[#7c8c9c]">
        <X strokeWidth={5} className="size-4" />
      </button>
    </div>
  </nav>
);

const TopToolbar = () => (
  <div className="flex h-[54px] shrink-0 items-center bg-[linear-gradient(to_bottom,#ffffff_0%,#f4f4fa_8%,#cfcfe7_28%,#cfcfe7_70%,#9c9cb2_100%)] pl-[9px]">
    <VGrip className="mb-4 h-6" />
    <div className="ml-[14px] flex items-start gap-1 pt-1">
      {combos.map((combo) => (
        <Combo key={combo.id} {...combo} />
      ))}
    </div>
    <Tool name="brush" />
    <Tool name="magic" />
    <VGrip className="mb-4 ml-3 mr-3 h-6" />
    <Tool name="envelope" />
    <Tool name="envelopes" />
    <Tool name="whatsThisMail" />
    <VGrip className="mb-4 ml-3 mr-3 h-6" />
    <Tool name="catalog" />
  </div>
);

const treeNodes = [
  { label: 'xy 平面', icon: 'plane', level: 1 },
  { label: 'yz 平面', icon: 'plane', level: 1, selected: true },
  { label: 'zx 平面', icon: 'plane', level: 1 },
  { label: '零件几何体', icon: 'body', level: 1, knob: '-' },
  { label: '草图.1', icon: 'sketch', level: 2, knob: '+', hidden: true },
  { label: '提取.1', icon: 'extractOpen', level: 2, knob: '-', hidden: true },
  { label: '`距离阈值`', icon: 'param', level: 3 },
  { label: '提取.2', icon: 'extractOpen', level: 2, knob: '+', hidden: true },
  { label: '提取.3', icon: 'extractOpen', level: 2, knob: '+', selected: true },
  { label: '平面.1', icon: 'plane', level: 2, knob: '+' },
  { label: '平面.2', icon: 'plane', level: 2, knob: '+' },
  { label: '项目.1', icon: 'item', level: 2 },
  { label: '项目.2', icon: 'item', level: 2 },
  { label: '相交.3', icon: 'intersect', level: 2 },
  { label: '多重输出.6', icon: 'bag', level: 2, current: true, last: true },
];

const Knob = ({ sign }) => (
  <svg viewBox="0 0 22 22" className="absolute left-[-10px] top-1/2 size-[22px] -translate-y-1/2">
    <circle cx="11" cy="11" r="11" fill="#8a8a8a" />
    <circle cx="9" cy="8" r="7" fill="#b4b4b4" />
    <path d={sign === '+' ? 'M3 11 H19 M11 3 V19' : 'M3 11 H19'} stroke="#000" strokeWidth="4" />
  </svg>
);

const TreeRow = ({ label, icon, level, knob, selected, hidden, current, last }) => {
  const labelColor = selected ? 'bg-[#ff8000]' : 'bg-[#333366]';
  return (
    <li className="flex h-[51px] items-center">
      {level === 1 && <span className="w-[14px]" />}
      {level === 2 && <span className="w-[50px]" />}
      {level === 3 && (
        <>
          <span className="w-[50px]" />
          <span className="h-full w-9 border-l-2 border-white" />
        </>
      )}
      <span className="relative flex h-full w-[22px] shrink-0 items-center">
        <span className={`absolute left-0 top-0 w-0.5 bg-white ${last || level === 3 || (level === 1 && knob) ? 'h-1/2' : 'h-full'}`} />
        <span className="h-0.5 w-full bg-white" />
        {knob && <Knob sign={knob} />}
      </span>
      {/* hidden features are drawn behind a dotted screen */}
      <span className={`relative ml-0.5 flex size-[42px] shrink-0 items-center justify-center ${hidden ? 'after:absolute after:inset-0 after:bg-[repeating-conic-gradient(#a8a8b4_0_25%,transparent_0_50%)] after:bg-[length:4px_4px]' : ''}`}>
        <Glyph name={icon} className={icon === 'plane' ? 'size-10' : 'size-[38px]'} />
      </span>
      <span className={`ml-[3px] whitespace-nowrap rounded-sm px-0.5 text-[25px] leading-9 text-white ${labelColor} ${current ? 'underline underline-offset-4' : ''}`}>
        {label}
      </span>
    </li>
  );
};

const Tree = () => (
  <div className="w-fit">
    <div className="flex h-[50px] items-center">
      <svg viewBox="0 0 44 44" className="size-11 pb-1">
        <path d="M14 2 H32 L41 10 V34 H14 Z" fill="#fff" stroke={TEAL} strokeWidth="2" />
        <path d="M32 2 V10 H41 Z" fill={CYAN} />
        <circle cx="18" cy="27" r="13" fill="#5c5c60" />
        <path d="M8 24 Q16 14 24 24 Q24 32 16 34" fill="none" stroke="#ffd890" strokeWidth="5" />
        <path d="M12 14 v6 M20 13 v6 M6 19 l4 3" stroke="#ffd890" strokeWidth="3" />
        <path d="M1 30 Q9 22 19 27 Q22 36 14 42 Q4 44 1 38 Z" fill={TEAL} />
        <path d="M1 31 Q10 24 18 31 Q18 40 10 39 Q6 35 12 33" fill="none" stroke="#f4f000" strokeWidth="3" />
      </svg>
      <span className="ml-0.5 px-1 text-[25px] leading-9 text-white">Part2</span>
    </div>
    <ul className="pt-px">
      {treeNodes.map((node) => (
        <TreeRow key={node.label} {...node} />
      ))}
    </ul>
  </div>
);

const Geometry = () => (
  <svg className="pointer-events-none absolute inset-0 size-full" aria-hidden="true">
    <g transform="translate(-3 -120)" fill="none" stroke="#f0f0f8" strokeWidth="1">
      <path d="M1394 449 L1675 546 L1588 689 L1336 603 Z" />
      <path d="M1471 542 L1545 568 L1525 609 L1450 584 Z" />
      <path d="M1327 1277 L1166 1220 L1075 1114 L1234 1078 L1501 1170 L1561 1277" />
      <path d="M1290 1172 L1365 1198 L1350 1221 L1277 1197 Z" />
      <path d="M1392 447h4v4h-4z M1673 544h4v4h-4z M1586 687h4v4h-4z M1334 601h4v4h-4z M1073 1112h4v4h-4z M1232 1076h4v4h-4z M1499 1168h4v4h-4z M1164 1218h4v4h-4z" fill="#fff" stroke="none" />

      {/* section circle with its two supports */}
      <path d="M1402 766 L1479 791 L1458 858 L1382 832 Z" strokeWidth="2" />
      <path d="M1401 781 L1477 808 L1458 841 L1385 816 Z" strokeWidth="2" />
      <g stroke="#f07c08" strokeWidth="2">
        <path d="M1364 789 L1370 783 L1385 776 L1407 773 L1440 779 L1460 787 L1480 798 L1493 813 L1497 827 L1493 834 L1483 843 L1470 847 L1453 848 L1423 846 L1403 839 L1387 830 L1373 817 L1365 802 Z" />
        <path d="M1448 760 L1434 785 L1424 824 L1411 862 L1430 828 L1437 790 Z" />
        <path d="M1362 787h4v4h-4z M1491 832h4v4h-4z" fill="#ff8000" />
      </g>
      <path d="M1358 782 l12 14 M1371 782 l-13 14 M1487 827 l13 14 M1500 827 l-13 14" />
      <path d="M1399 753 H1376 L1370 771 M1368 769 l7 2 l-8 14 z M1388 798 L1412 806 L1408 800 L1427 812 L1410 809" stroke="#f00000" />

      {/* compass */}
      <g stroke="#dcc8ff" strokeWidth="2">
        <path d="M2172 239 L2177 227 Q2190 207 2207 200 Q2222 191 2237 191 Q2262 190 2280 196 L2256 268 Z" fill="#1c4660" />
        <path d="M2232 293 L2247 298 L2273 310 L2289 324 L2273 369 L2232 356 Z" fill="#16164f" />
        <path d="M2288 177 L2245 310" />
        <circle cx="2288" cy="177" r="4" fill="#dcc8ff" />
      </g>
      <path d="M2343 1209 L2376 1220 L2391 1184" />
      <g stroke="none" className="text-xl">
        <text x="2274" y="163" fill="#f0e000">z</text>
        <text x="2157" y="224" fill="#f0e000">x</text>
        <text x="2252" y="212" fill="#f0e000">y</text>
        <text x="2333" y="1209" fill="#f0f0f8">x</text>
        <text x="2389" y="1187" fill="#f0f0f8">z</text>
        <text x="2382" y="1201" fill="#f0f0f8">y</text>
        <text x="1398" y="754" fill="#f00000" fontSize="21">第二元素：1</text>
        <text x="1409" y="799" fill="#f00000" fontSize="21">第一元素：1</text>
      </g>
    </g>
  </svg>
);

const FloatingToolbar = ({ title, tools, className }) => (
  <section className={`absolute w-[294px] overflow-hidden rounded-md border border-[#55555c] shadow-[0_6px_16px_rgba(0,0,0,0.35)] ${className}`}>
    <div className="flex h-[46px] items-center justify-between bg-gradient-to-r from-[#edf3fa] to-[#e8f5f6] pl-3">
      <h2 className="pb-1 text-lg leading-6 text-black">{title}</h2>
      <button type="button" aria-label="close" className="mt-1 flex size-[30px] items-center justify-center bg-[#c75050] text-white">
        <X strokeWidth={5} className="size-3" />
      </button>
    </div>
    <div className="flex h-[52px] items-center gap-[3px] border-t border-[#c8c8d4] bg-[linear-gradient(to_bottom,#f8f8fc_0%,#cfcfe7_35%,#cfcfe7_75%,#9c9cb2_100%)] pb-1.5 pl-1.5 pt-0.5">
      <VGrip className="mb-4 mr-[7px] h-6" />
      {tools.map(([name, menu]) => (
        <Tool key={name} name={name} menu={menu} />
      ))}
    </div>
  </section>
);

const operationTools = [
  ['join', true],
  ['split', true],
  ['extract', true],
  ['sweep', true],
  ['translate', true],
  ['extrapolate', true],
];

const replicationTools = [
  ['law', true],
  ['spline', true],
  ['nodeGrid', true],
  ['clipboard', false],
  ['catalogBook', true],
  ['factory', true],
];

const CheckRow = ({ label, strong, disabled }) => (
  <label className={`flex items-center gap-1.5 text-lg leading-6 ${strong ? 'font-bold' : ''} ${disabled ? 'text-[#a8a498] [text-shadow:1px_1px_0_#fff]' : 'text-black'}`}>
    <input
      type="checkbox"
      disabled={disabled}
      className={`ml-px size-[18px] shrink-0 appearance-none border-2 border-[#555] ${disabled ? 'bg-transparent' : 'bg-[#ffffe0]'}`}
    />
    {label}
  </label>
);

const ElementField = ({ id, label, value }) => (
  <div className="flex items-center">
    <label htmlFor={id} className="w-[94px] whitespace-nowrap text-lg leading-6">{label}</label>
    <input id={id} defaultValue={value} className="h-8 w-[232px] border-2 border-[#8c8c96] bg-white pl-1 text-lg leading-6" />
    <button type="button" aria-label="multi-selection" className="flex size-8 items-center justify-center border-2 border-b-[#707078] border-l-white border-r-[#707078] border-t-white bg-[#efe2d0]">
      <Glyph name="bag" className="size-6" />
    </button>
  </div>
);

const GroupTitle = ({ children }) => (
  <legend className="flex h-6 w-full items-center whitespace-nowrap text-lg leading-6 after:h-[3px] after:flex-1 after:border-b after:border-t after:border-b-white after:border-t-[#8c8c96]">
    {children}
  </legend>
);

const ResultGroup = ({ title, name, first, second }) => (
  <fieldset disabled>
    <GroupTitle>{title}</GroupTitle>
    <div className="mt-0.5 flex items-center pb-0.5 text-lg leading-6">
      <span className="w-[60px]">结果：</span>
      <label className="flex items-center gap-2 pt-2 text-[#a8a498] [text-shadow:1px_1px_0_#fff]">
        <input
          type="radio"
          name={name}
          defaultChecked
          className="size-[18px] appearance-none rounded-full border border-[#d8cbb4] bg-[radial-gradient(circle_at_40%_30%,#c8dcf4,#7494c4_60%,#54709c)]"
        />
        {first}
      </label>
      <label className="ml-[10px] flex items-center gap-2 pt-2 text-[#a8a498] [text-shadow:1px_1px_0_#fff]">
        <input type="radio" name={name} className="size-[18px] appearance-none rounded-full border-2 border-[#555]" />
        {second}
      </label>
    </div>
  </fieldset>
);

const DialogButton = ({ label, ball, primary }) => (
  <button
    type="button"
    className={`flex h-[34px] w-[82px] items-center justify-center gap-1.5 border-[3px] bg-[#cfcfe7] text-lg leading-6 text-black ${
      primary ? 'border-[#70707a]' : 'border-b-[#82828e] border-l-[#f0f0f8] border-r-[#82828e] border-t-[#f0f0f8]'
    }`}
  >
    {ball && <span className={`size-[18px] rounded-full ${ball}`} />}
    {label}
  </button>
);

const IntersectionDialog = () => (
  <section className="absolute left-[1681px] top-[561px] w-[422px] overflow-hidden rounded-[10px] border border-[#66666e] bg-[linear-gradient(to_bottom,#f2dfca_0%,#f7e5c6_40%,#ffe6c0_100%)] text-black shadow-[0_12px_30px_rgba(0,0,0,0.4)]">
    <div className="flex h-[45px] items-center bg-[#f2f2f2] pb-0.5 pl-3 text-[#8a8a8a]">
      <h2 className="flex-1 text-lg leading-6">相交定义</h2>
      <button type="button" aria-label="help" className="w-[70px] text-xl leading-6">?</button>
      <button type="button" aria-label="close" className="flex w-[70px] justify-center"><X strokeWidth={1} className="size-6" /></button>
    </div>
    <form className="relative flex flex-col pb-3 pl-3 pr-[14px] pt-4">
      <ElementField id="first-element" label="第一元素：" value="yz 平面" />
      <div className="mb-[11px] mt-2.5"><CheckRow label="扩展相交的线性支持面" strong /></div>
      <ElementField id="second-element" label="第二元素：" value="提取.3" />
      <div className="mb-[11px] mt-2.5"><CheckRow label="扩展相交的线性支持面" /></div>
      <div className="flex flex-col gap-[9px]">
        <ResultGroup title="具有共同区域的曲线相交" name="curves" first="曲线" second="点" />
        <ResultGroup title="曲面部分相交" name="surfaces" first="轮廓" second="曲面" />
        <fieldset>
          <GroupTitle>外插延伸选项</GroupTitle>
          <div className="mt-2.5 flex flex-col gap-4">
            <CheckRow label="在第一元素上外插延伸相交" strong />
            <CheckRow label="与非共面线段相交" disabled />
          </div>
        </fieldset>
      </div>
      <div className="mt-[22px] flex justify-end gap-[10px]">
        <DialogButton label="确定" primary ball="bg-[radial-gradient(circle_at_40%_30%,#b0ffa0,#18a018_50%,#045004)]" />
        <DialogButton label="取消" ball="bg-[radial-gradient(circle_at_40%_30%,#ffc0b0,#e02818_50%,#801008)]" />
        <DialogButton label="预览" />
      </div>
      <svg viewBox="0 0 80 60" className="pointer-events-none absolute bottom-0 left-0 h-[60px] w-20" aria-hidden="true">
        <defs>
          <radialGradient id="glow">
            <stop offset="0" stopColor="#ff9a38" />
            <stop offset="0.3" stopColor="#ffc870" />
            <stop offset="0.7" stopColor="#ffd898" stopOpacity="0.8" />
            <stop offset="1" stopColor="#ffe6c0" stopOpacity="0" />
          </radialGradient>
          <linearGradient id="earth" x1="0" y1="1" x2="1" y2="0">
            <stop offset="0" stopColor="#3c4048" />
            <stop offset="0.5" stopColor="#5c7c90" />
            <stop offset="1" stopColor="#3aa0d8" />
          </linearGradient>
        </defs>
        <circle cx="40" cy="32" r="32" fill="url(#glow)" />
        <path d="M0 30 Q44 24 64 60 H0 Z" fill="url(#earth)" />
        <path d="M0 31 Q38 26 58 50" fill="none" stroke="#a8d8e8" strokeWidth="3" />
      </svg>
    </form>
  </section>
);

const Viewport = () => (
  <main className="relative min-w-0 flex-1 overflow-hidden border-l-[3px] border-t-[3px] border-[#80807c] bg-[linear-gradient(to_bottom,#333366_0%,#48487a_68%,#adadc2_100%)]">
    <Tree />
    <Geometry />
    <p className="absolute left-[682px] top-[524px] whitespace-nowrap text-4xl leading-[48px] text-[#fa3c3c]">
      找到圆和两个平面相交的交点
    </p>
    <FloatingToolbar title="操作" tools={operationTools} className="left-[1946px] top-[153px]" />
    <FloatingToolbar title="复制" tools={replicationTools} className="left-[1973px] top-[588px]" />
    <IntersectionDialog />
  </main>
);

const VTool = ({ name, menu }) => (
  <button type="button" aria-label={name} className={`relative flex w-[46px] items-center justify-center ${menu ? 'h-[45px]' : 'h-[42px]'}`}>
    <Glyph name={name} className="size-[31px]" />
    {menu && (
      <svg viewBox="0 0 12 8" className="absolute bottom-0 right-[-2px] h-2 w-3">
        <path d="M1 1 H11 L6 7 Z" fill="#000" />
      </svg>
    )}
  </button>
);

const Rule = () => (
  <div className="flex h-3 items-center">
    <span className="h-0.5 w-[51px] border-b border-white bg-[#8c8c98]" />
  </div>
);

const sideTools = [
  'grip',
  ['workbench'],
  'grip',
  ['db1'],
  ['db2'],
  ['db3'],
  ['db4'],
  'grip',
  ['arrow', true],
  ['multiSelect', true],
  'grip',
  ['sketch', true],
  'grip',
  ['point', true],
  ['line', true],
  ['plane', true],
  'rule',
  ['item', true],
  ['intersectActive'],
  ['offset', true],
  'rule',
  ['circle', true],
  ['spline', true],
  'grip',
  ['law'],
  'grip',
  ['scan'],
  'grip',
  ['extrude'],
  ['revolve'],
];

const SideToolbar = () => (
  <aside className="flex w-[116px] shrink-0 justify-between bg-[linear-gradient(to_right,#f8f8fc_0%,#cfcfe7_12%,#cfcfe7_88%,#a4a4bc_100%)] pl-[7px]">
    <div className="-mt-0.5 flex w-[50px] flex-col">
      {sideTools.map((tool, i) => {
        if (tool === 'grip') return <HGrip key={i} />;
        if (tool === 'rule') return <Rule key={i} />;
        return <VTool key={i} name={tool[0]} menu={tool[1]} />;
      })}
      <ChevronsDown strokeWidth={2} className="ml-7 mt-9 size-5 text-white" />
    </div>
    <div className="flex w-[52px] flex-col justify-end pb-3">
      <HGrip />
      <VTool name="explode" />
      <VTool name="surfDistance" />
      <VTool name="surfProject" />
    </div>
  </aside>
);

const bottomGroups = [
  [['newFile'], ['open'], ['save'], ['print'], ['cut'], ['copy'], ['paste'], ['undo', true], ['redo', true], ['help']],
  [['annotation', true]],
  [['boxAxes', true]],
  [['constraint', true]],
  [['fx'], ['comment'], ['chain'], ['table', true], ['relations'], ['lock', true], ['equation']],
  [
    ['fly'], ['fit'], ['pan'], ['rotate'], ['zoomIn'], ['zoomOut'], ['normalView'], ['multiView'],
    ['isoView', true], ['shading', true, true], ['hideShow'], ['swapSpace'],
  ],
  [['applyMaterial']],
  [['measure'], ['caliper'], ['inertia']],
  [['camera']],
  [
    ['swirl'], ['swirlHand'], ['axis'], ['treeSelect'], ['grid', true], ['clipBox', true], ['glassBox'],
    ['bolt'], ['handDisabled'], ['treeInsert'], ['patch', true], ['stack'], ['eraser', true],
  ],
];

const BottomToolbar = () => (
  <footer className="flex h-[54px] shrink-0 items-center bg-[linear-gradient(to_bottom,#ffffff_0%,#fafafd_12%,#cfcfe7_38%,#cfcfe7_70%,#a4a4bc_100%)] pl-[5px]">
    {bottomGroups.map((group, i) => (
      <div key={i} className="flex h-full items-center">
        <VGrip className={`mb-3 mr-3 h-6 ${i > 0 ? 'ml-4' : ''}`} />
        <div className="flex h-full pt-2">
          {group.map(([name, menu, highlight]) => (
            <Tool key={name} name={name} menu={menu} highlight={highlight} />
          ))}
        </div>
      </div>
    ))}
    <div className="ml-auto flex items-center gap-1.5 pr-2">
      <ChevronsRight strokeWidth={2} className="mb-3 size-5 text-white" />
      <svg viewBox="0 0 66 50" className="h-[50px] w-[66px]" aria-label="CATIA">
        <path d="M14 3 Q28 0 29 6 Q28 11 15 15 Q24 9 22 6 Q20 3 14 3 Z" fill="#e03030" />
        <path d="M10 16 Q26 14 21 24 Q16 31 2 31 Q8 22 12 18 M14 19 L8 28 Q17 26 18 19 Z" fill="#4a3a98" fillRule="evenodd" />
        <path d="M38 14 Q27 13 28 19 Q38 23 32 28 L23 30" fill="none" stroke="#f0a020" strokeWidth="4" />
        <text x="12" y="44" fontSize="14" fontStyle="italic" fontWeight="bold" fill="#4a3a98">CATIA</text>
      </svg>
    </div>
  </footer>
);

// red marker pen drawn on top of the whole window
const Markup = () => (
  <>
    <div className="pointer-events-none absolute left-[2437px] top-[765px] h-[71px] w-[85px] border-[3px] border-[#f23838]" />
    <svg className="pointer-events-none absolute inset-0 size-full" aria-hidden="true">
      <path d="M2400 789 L2300 823 L2068 907 L1984 943 L1981 938 L1967 951 L1986 953 L1984 948 L2068 915 L2300 826 Z" fill="#fa3c3c" />
      <path d="M2225 1330 L2257 1323 L2259 1330 Z" fill="#ff7038" />
    </svg>
  </>
);

export default function App() {
  return (
    <div className={`relative flex h-screen w-full flex-col overflow-hidden bg-[#cfcfe7] ${FONT}`}>
      <TitleBar />
      <MenuBar />
      <TopToolbar />
      <div className="flex min-h-0 flex-1">
        <Viewport />
        <SideToolbar />
      </div>
      <BottomToolbar />
      <Markup />
    </div>
  );
}
